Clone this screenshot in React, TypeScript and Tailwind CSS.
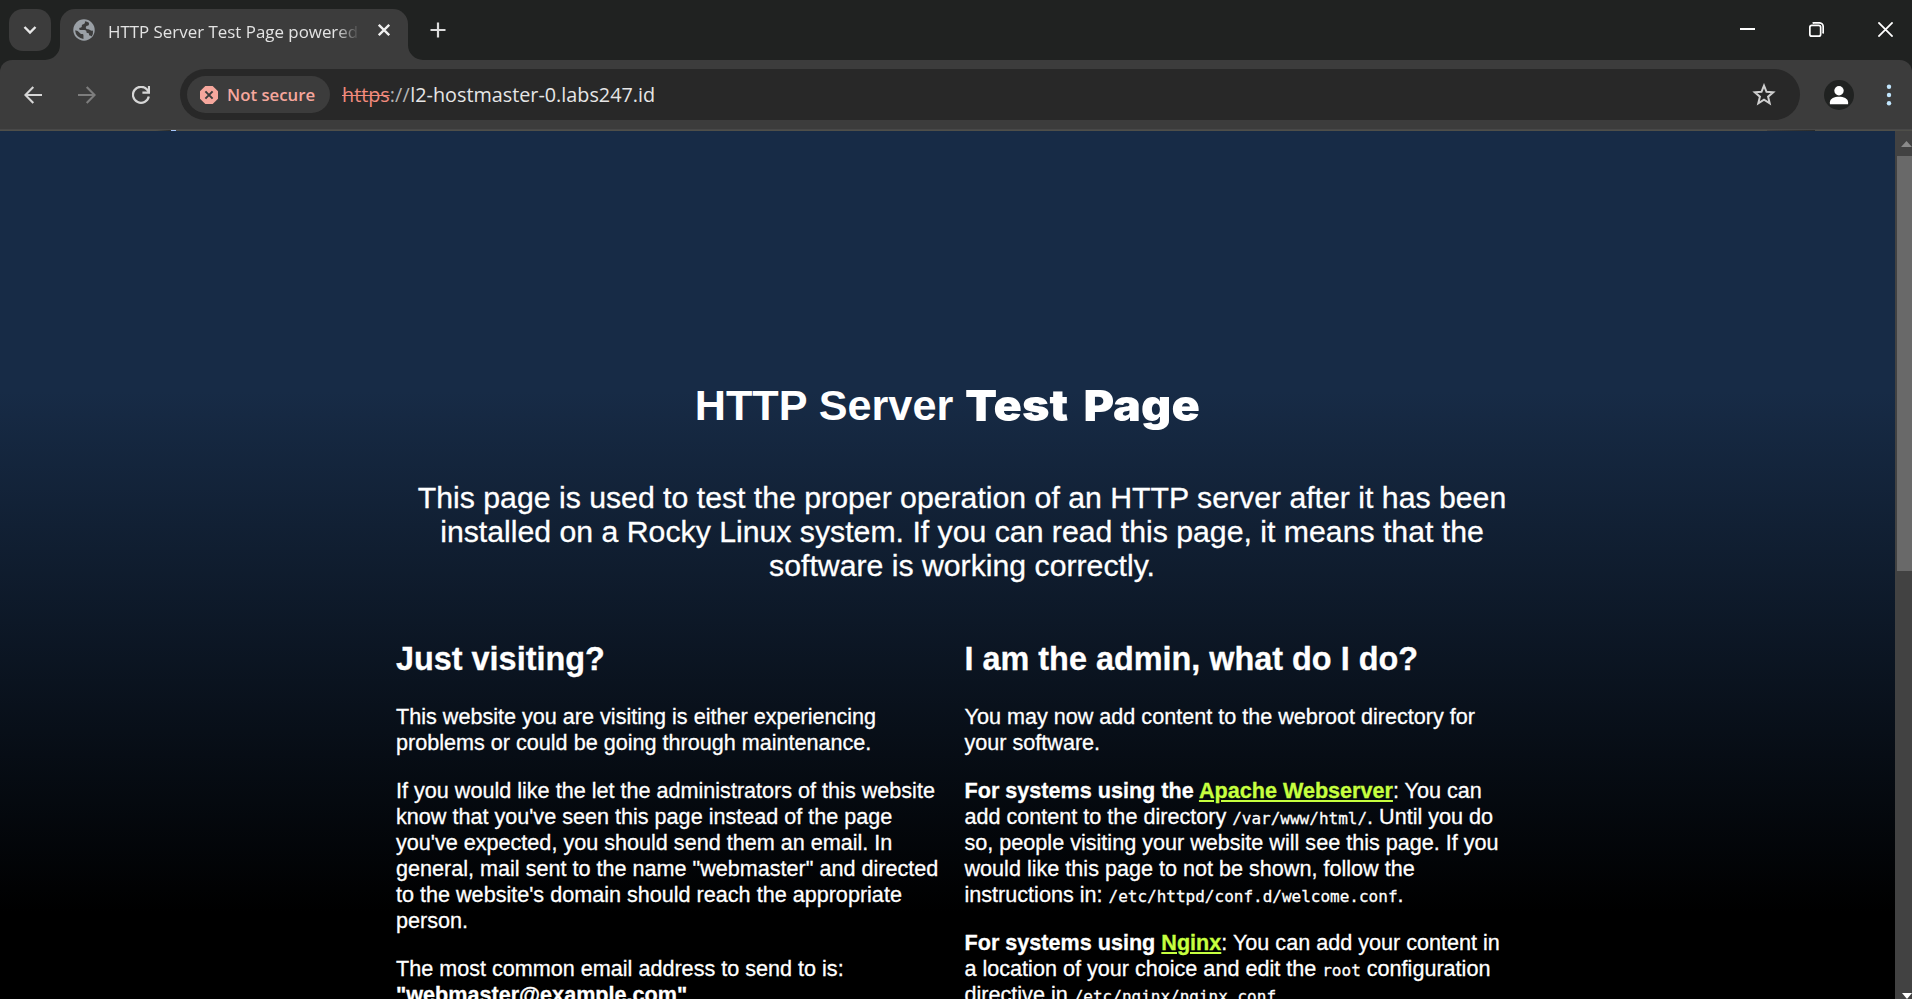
import React from "react";

const ARIAL = "font-['Liberation_Sans',Arial,sans-serif]";
const UI = "font-['Open_Sans','Noto_Sans',sans-serif]";

function Code({ children }: { children: React.ReactNode }) {
  return <code className="font-['DejaVu_Sans_Mono',monospace] text-[16px] leading-none">{children}</code>;
}

function Link({ children }: { children: React.ReactNode }) {
  return (
    <a href="#" className="text-[#c6ff3f] underline decoration-2 underline-offset-2">
      {children}
    </a>
  );
}

function TabStrip() {
  return (
    <div className="flex h-[60px] shrink-0 items-start bg-[#202221] pl-[9px] pt-[9px]">
      <button className="flex size-[42px] items-center justify-center rounded-[14px] bg-[#3c3c3c]">
        <svg width="14" height="10" viewBox="0 0 14 10" fill="none" stroke="#e8e8e8" strokeWidth="2.4">
          <path d="M1.5 2 7 7.5 12.5 2" />
        </svg>
      </button>
      <div className="relative ml-[9px] flex h-[51px] w-[348px] items-start rounded-t-[15px] bg-[#3c3c3c] pl-[13px] pt-[10px]">
        <svg className="absolute -left-[15px] bottom-0" width="15" height="15">
          <path d="M15 0v15H0A15 15 0 0 0 15 0z" fill="#3c3c3c" />
        </svg>
        <svg className="absolute -right-[15px] bottom-0" width="15" height="15">
          <path d="M0 0v15h15A15 15 0 0 1 0 0z" fill="#3c3c3c" />
        </svg>
        <svg width="22" height="22" viewBox="0 0 24 24">
          <circle cx="12" cy="12" r="11.7" fill="#9aa0a6" />
          <path
            d="M13 2.4c.3 1.600-.2 2.900-1.700 3.300-1.500.4-1.800 1.100-1.700 2.300.1 1-.6 1.500-1.700 1.500-1 0-1.400.7-1 1.600.3.700 1 .9 2 .9h3.600c1.400 0 2.200.8 2.200 2.100 0 .9.500 1.200 1.300 1.200 1 0 1.500.6 1.500 1.500v.9c1.300.1 2.300.7 2.900 1.300A9.800 9.800 0 0 0 21.800 12.500c-1.200.4-2.300.3-3.200-.4-.8-.6-1.400-1-2.600-1-1.400 0-2-.8-2-1.900 0-1.200.8-1.900 1.900-1.900 1 0 1.500-.5 1.500-1.500V4A9.800 9.800 0 0 0 13 2.400z M2.300 12.600c1.200 0 2.600.2 3.700 1.200l2 1.900c.5.500 1.100.7 1.900.7 1 0 1.500.5 1.500 1.500v3.800A9.800 9.800 0 0 1 2.300 12.600z"
            fill="#3c3c3c"
          />
        </svg>
        <div
          className={`${UI} ml-[13px] mt-px h-[24px] w-[250px] overflow-hidden whitespace-nowrap text-[16.9px] leading-[24px] text-[#e3e3e3] [mask-image:linear-gradient(to_right,black_228px,transparent_252px)]`}
        >
          HTTP Server Test Page powered
        </div>
        <svg className="ml-[20px] mt-[5px]" width="12" height="12" viewBox="0 0 12 12" stroke="#f0f0f0" strokeWidth="2.3">
          <path d="M.8.8 11.200 11.200M11.200.8.8 11.200" />
        </svg>
      </div>
      <svg className="ml-[22px] mt-[13px]" width="16" height="16" viewBox="0 0 16 16" stroke="#dcdcdc" strokeWidth="2.200">
        <path d="M8 .5v15M.5 8h15" />
      </svg>
      <div className="ml-auto mr-[19px] mt-[13px] flex gap-[54px]">
        <svg width="15" height="15" viewBox="0 0 15 15" stroke="#fff" strokeWidth="2">
          <path d="M0 7h15" />
        </svg>
        <svg width="15" height="15" viewBox="0 0 15 15" fill="none" stroke="#fff" strokeWidth="1.700">
          <rect x=".85" y="3.350" width="10.800" height="10.800" rx="2" />
          <path d="M3.600 1.200q.8-.4 1.600-.4H10.200a4 4 0 0 1 4 4v5q0 1-.4 1.700" />
        </svg>
        <svg width="15" height="15" viewBox="0 0 15 15" stroke="#fff" strokeWidth="1.800">
          <path d="M.4.400 14.600 14.600M14.600.400.4 14.600" />
        </svg>
      </div>
    </div>
  );
}

function Toolbar() {
  return (
    <div className="h-[71px] shrink-0 bg-[#202221]">
      <div className="flex h-[70px] items-start rounded-t-[12px] border-b border-[#484848] bg-[#3c3c3c] pl-[24px] pt-[9px]">
        <div className="flex h-[51px] items-center gap-[36px]">
          <svg width="18" height="18" viewBox="0 0 18 18" fill="none" stroke="#d6d6d6" strokeWidth="2.100">
            <path d="M18 9H1.800M9.300 1 1.400 9l7.900 8" />
          </svg>
          <svg width="18" height="18" viewBox="0 0 18 18" fill="none" stroke="#7d7d7d" strokeWidth="2.100">
            <path d="M0 9h16.200M8.700 1l7.900 8-7.900 8" />
          </svg>
          <svg width="18" height="18" viewBox="0 0 18 18" fill="none" stroke="#d6d6d6" strokeWidth="2.200">
            <path d="M16.800 10.500A8 8 0 1 1 15 3.500L16.900 6" />
            <path d="M17 0v6.600h-6.600" />
          </svg>
        </div>
        <div className="ml-[30px] flex h-[51px] w-[1620px] items-center rounded-full bg-[#282828] pl-[7px] pr-[24px]">
          <div className="flex h-[37px] w-[143px] items-center rounded-full bg-[#3c3c3c] pl-[13px]">
            <svg width="18" height="18" viewBox="0 0 18 18">
              <path d="M5.300 0h7.400L18 5.300v7.400L12.700 18H5.300L0 12.700V5.300z" fill="#f6a79d" />
              <path d="M5.400 5.400l7.200 7.200M12.600 5.400l-7.200 7.200" stroke="#3c3c3c" strokeWidth="2" />
            </svg>
            <span className={`${UI} ml-[9px] whitespace-nowrap text-[16.8px] font-semibold leading-[24px] text-[#f6a79d]`}>
              Not secure
            </span>
          </div>
          <div className={`${UI} ml-[12px] whitespace-nowrap text-[19.8px] leading-[28px] text-[#e6e6e6]`}>
            <span className="text-[#f28b7d] line-through decoration-1">https</span>
            <span className="text-[#b4b4b4]">:</span>
            <span className="tracking-[0.4px] text-[#b4b4b4]">//</span>l2-hostmaster-0.labs247.id
          </div>
          <svg className="ml-auto" width="24" height="24" viewBox="0 0 24 24" fill="none" stroke="#cfcfcf" strokeWidth="2">
            <path d="M12 2.600l2.500 6.200 6.700.5-5.100 4.400 1.600 6.600L12 16.700l-5.700 3.600 1.600-6.600L2.800 9.300l6.700-.5z" />
          </svg>
        </div>
        <div className="ml-[24px] flex h-[51px] items-center gap-[32px]">
          <svg width="30" height="30" viewBox="0 0 30 30">
            <circle cx="15" cy="15" r="15" fill="#202221" />
            <circle cx="15" cy="10.700" r="4.700" fill="#fff" />
            <path d="M5.900 24.200v-2c0-3.700 4.500-5.500 9.100-5.500s9.100 1.800 9.100 5.500v2z" fill="#fff" />
          </svg>
          <svg width="6" height="22" viewBox="0 0 6 22" fill="#c2e7ff">
            <circle cx="3" cy="2.800" r="2.200" />
            <circle cx="3" cy="11" r="2.200" />
            <circle cx="3" cy="19.200" r="2.200" />
          </svg>
        </div>
      </div>
      <div className="flex h-px bg-[#4f4f49]">
        <div className="ml-[156px] h-px w-[15px] bg-linear-to-r from-[#4f4f49] to-[#2a2c2c]" />
        <div className="h-px w-[5px] bg-[#a8c7fa]" />
        <div className="ml-auto mr-[97px] h-px w-[48px] bg-linear-to-r from-[#424242] to-[#2a2c2c]" />
      </div>
    </div>
  );
}

function Page() {
  return (
    <main
      className={`${ARIAL} min-w-0 flex-1 overflow-hidden bg-[linear-gradient(180deg,#172b46_30%,#000000_90%)] pt-[249px] text-white`}
    >
      <h1 className="flex justify-center text-[43.2px] font-bold leading-[50px]">
        <span className="whitespace-pre">HTTP Server </span>
        <strong className="w-[235px]">
          <span className="inline-block origin-left scale-x-[1.085] whitespace-nowrap font-['Inter',sans-serif] text-[43.2px] font-black [word-spacing:5.5px]">
            Test Page
          </span>
        </strong>
      </h1>
      <p className="ml-[396px] mt-[50px] w-[1132px] text-center text-[30.24px] leading-[34px] [-webkit-text-stroke:0.3px_white]">
        This page is used to test the proper operation of an HTTP server after it has been
        <br />
        installed on a Rocky Linux system. If you can read this page, it means that the
        <br />
        software is working correctly.
      </p>
      <div className="ml-[396px] mt-[57px] grid w-[1116px] grid-cols-2 gap-x-[21px] text-[21.6px] leading-[26px]">
        <section className="flex flex-col gap-[22px] [-webkit-text-stroke:0.3px_white]">
          <h2 className="mb-[4px] text-[32.4px] font-bold leading-[38px]">Just visiting?</h2>
          <p>This website you are visiting is either experiencing problems or could be going through maintenance.</p>
          <p>
            If you would like the let the administrators of this website know that you've seen this page instead of the
            page you've expected, you should send them an email. In general, mail sent to the name "webmaster" and
            directed to the website's domain should reach the appropriate person.
          </p>
          <p>
            The most common email address to send to is:
            <br />
            <strong>"webmaster@example.com"</strong>
          </p>
        </section>
        <section className="flex flex-col gap-[22px] [-webkit-text-stroke:0.3px_currentColor]">
          <h2 className="mb-[4px] text-[32.4px] font-bold leading-[38px]">I am the admin, what do I do?</h2>
          <p>
            You may now add content to the webroot directory for
            <br />
            your software.
          </p>
          <p>
            <strong>
              For systems using the <Link>Apache Webserver</Link>
            </strong>
            : You can
            <br />
            add content to the directory <Code>/var/www/html/</Code>. Until you do so, people visiting your website will
            see this page. If you would like this page to not be shown, follow the
            <br />
            instructions in: <Code>/etc/httpd/conf.d/welcome.conf</Code>.
          </p>
          <p>
            <strong>
              For systems using <Link>Nginx</Link>
            </strong>
            : You can add your content in a location of your choice and edit the <Code>root</Code> configuration
            directive in <Code>/etc/nginx/nginx.conf</Code>.
          </p>
        </section>
      </div>
    </main>
  );
}

function Scrollbar() {
  return (
    <div className="flex w-[17px] shrink-0 flex-col items-end bg-[#424242]">
      <svg className="mt-[10px] shrink-0" width="11" height="6" viewBox="0 0 11 6">
        <path d="M0 6 5.500 0 11 6z" fill="#8a8a8a" />
      </svg>
      <div className="mt-[9px] h-[415px] w-[15px] bg-[#696969]" />
      <svg className="mt-auto shrink-0" width="10" height="6" viewBox="0 0 10 6">
        <path d="M0 0h10L5 6z" fill="#ffffff" />
      </svg>
    </div>
  );
}

export default function App() {
  return (
    <div className="flex h-[999px] w-[1912px] flex-col overflow-hidden bg-[#202221]">
      <TabStrip />
      <Toolbar />
      <div className="flex min-h-0 flex-1">
        <Page />
        <Scrollbar />
      </div>
    </div>
  );
}
